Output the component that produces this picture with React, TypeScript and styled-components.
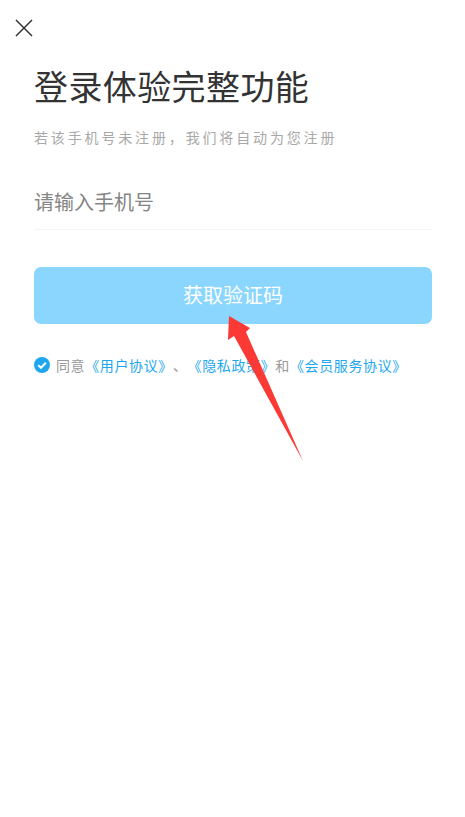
import { createGlobalStyle } from "styled-components"
import styled from "styled-components"

const GlobalStyle = createGlobalStyle`
  html, body {
    margin: 0;
    padding: 0;
    background: #fff;
  }
  body {
    font-family: "Noto Sans CJK SC", "Noto Sans", sans-serif;
  }
`

export default function App() {
  return (
    <Page>
      <GlobalStyle />
      <CloseButton aria-label="close">
        <svg width="18" height="18" viewBox="0 0 18 18" fill="none" stroke="#333" strokeWidth="1.5">
          <path d="M1 1L17 17M17 1L1 17" />
        </svg>
      </CloseButton>
      <Content>
        <Title>登录体验完整功能</Title>
        <Subtitle>若该手机号未注册，我们将自动为您注册</Subtitle>
        <PhoneField>请输入手机号</PhoneField>
        <SubmitButton>获取验证码</SubmitButton>
        <Agreement>
          <svg width="16" height="16" viewBox="0 0 16 16">
            <circle cx="8" cy="8" r="8" fill="#1ea7ee" />
            <path d="M4.2 8.2L7 10.800L11.800 5.800" fill="none" stroke="#fff" strokeWidth="2" />
          </svg>
          <AgreementText>
            同意<Link>《用户协议》</Link>、<Link>《隐私政策》</Link>和<Link>《会员服务协议》</Link>
          </AgreementText>
        </Agreement>
      </Content>
      <Arrow width="85" height="155" viewBox="0 0 85 155">
        <path d="M9 0L8 24L14 20L83 145L26 16L30 12Z" fill="#fb3a36" />
      </Arrow>
    </Page>
  )
}

const Page = styled.div`
  position: relative;
  width: 465px;
  height: 817px;
  overflow: hidden;
  background: #fff;
`
const CloseButton = styled.div`
  display: flex;
  padding: 19px 0 0 15px;
  height: 18px;
`
const Content = styled.div`
  display: flex;
  flex-direction: column;
  padding: 0 33px 0 34px;
`
const Title = styled.h1`
  margin: 25px 0 0;
  font-size: 34px;
  line-height: 48px;
  font-weight: 400;
  letter-spacing: 0.4px;
  color: #333;
`
const Subtitle = styled.p`
  margin: 17px 0 0;
  font-size: 14px;
  line-height: 20px;
  letter-spacing: 2.85px;
  color: #a8a8a8;
`
const PhoneField = styled.div`
  margin-top: 40px;
  height: 42px;
  line-height: 30px;
  font-size: 20px;
  color: #858585;
  border-bottom: 1px solid #f5f5f5;
`
const SubmitButton = styled.button`
  margin-top: 37px;
  height: 57px;
  padding: 0 0 2px;
  border: 0;
  border-radius: 7px;
  background: #8ad6fe;
  color: #fff;
  font-family: inherit;
  font-size: 20px;
`
const Agreement = styled.div`
  display: flex;
  align-items: center;
  gap: 6px;
  margin-top: 31px;
`
const AgreementText = styled.span`
  font-size: 14px;
  line-height: 20px;
  letter-spacing: 0.62px;
  text-spacing-trim: space-all;
  white-space: nowrap;
  color: #9a9a9a;
`
const Link = styled.span`
  color: #1ea7ee;
`
const Arrow = styled.svg`
  position: absolute;
  left: 220px;
  top: 316px;
`
